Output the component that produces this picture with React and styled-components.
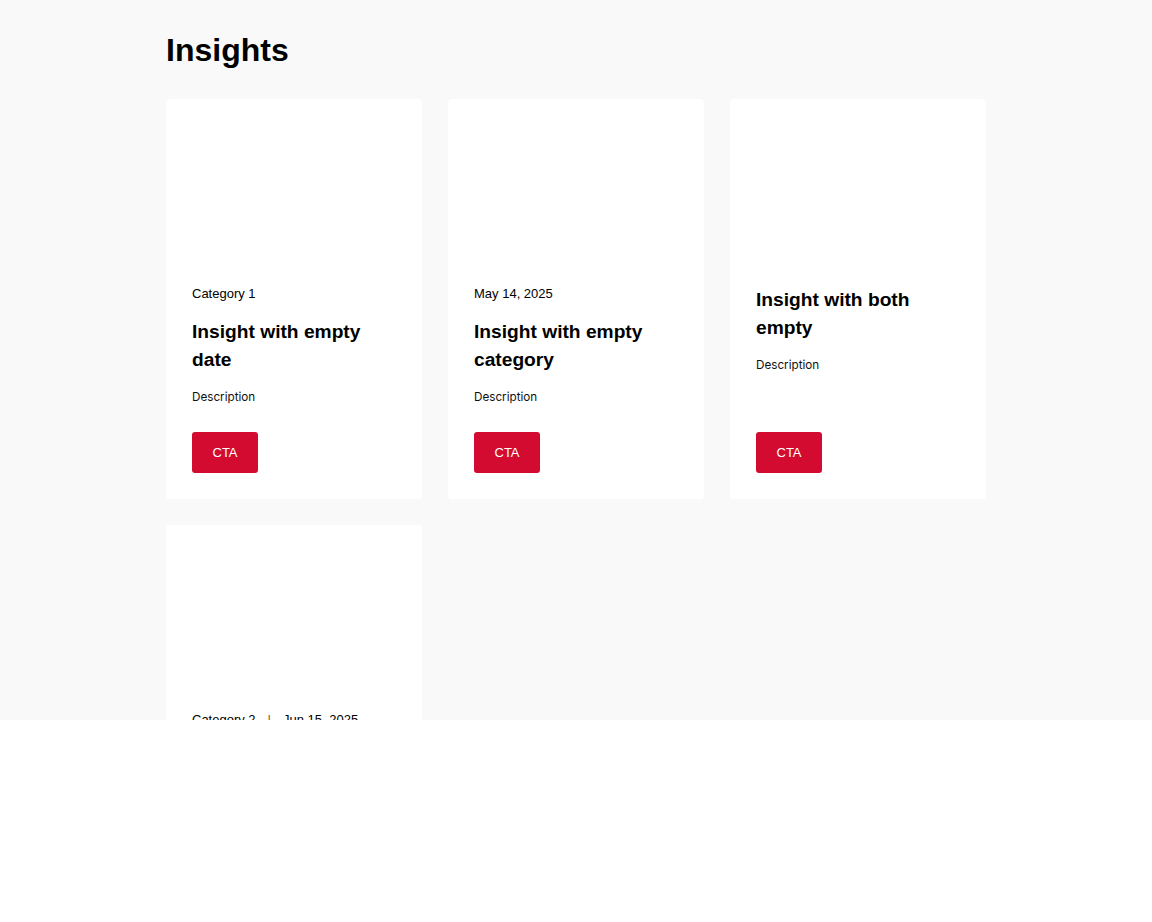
import React from "react";
import styled, { createGlobalStyle } from "styled-components";

const GlobalStyle = createGlobalStyle`
  body {
    margin: 0;
    background: #fff;
    font-family: "Liberation Sans", Arial, sans-serif;
    color: #000;
  }
`;

const Section = styled.section`
  height: 720px;
  overflow: hidden;
  background: #f9f9f9;
`;

const Container = styled.div`
  width: 820px;
  margin: 0 auto;
  padding-top: 32px;
`;

const Heading = styled.h1`
  margin: 0 0 30px;
  font-size: 32px;
  font-weight: 700;
  line-height: 37px;
`;

const Grid = styled.div`
  display: grid;
  grid-template-columns: repeat(3, 1fr);
  gap: 26px;
`;

const Card = styled.article`
  display: flex;
  flex-direction: column;
  background: #fff;
  border-radius: 4px;
`;

const ImageSlot = styled.div`
  height: 160px;
`;

const Body = styled.div`
  flex: 1;
  display: flex;
  flex-direction: column;
  padding: 27px 26px 26px;
`;

const Meta = styled.div`
  display: flex;
  align-items: center;
  gap: 12px;
  margin-bottom: 16px;
  font-size: 13px;
  line-height: 16px;
  color: #000;
`;

const Separator = styled.span`
  color: #7a5a2a;
`;

const Title = styled.h3`
  margin: 0 0 14px;
  font-size: 19.2px;
  font-weight: 700;
  line-height: 28px;
`;

const Description = styled.p`
  margin: 0 0 26px;
  font-family: Inter, "Liberation Sans", sans-serif;
  font-size: 11.7px;
  line-height: 18px;
  color: #111;
`;

const Cta = styled.a`
  margin-top: auto;
  align-self: flex-start;
  display: inline-block;
  padding: 12px 20.5px;
  background: #d30b30;
  border-radius: 3px;
  color: #fff;
  font-size: 13px;
  line-height: 17px;
  text-decoration: none;
`;

const insights = [
  { category: "Category 1", date: "", title: "Insight with empty date" },
  { category: "", date: "May 14, 2025", title: "Insight with empty category" },
  { category: "", date: "", title: "Insight with both empty" },
  { category: "Category 2", date: "Jun 15, 2025", title: "Insight with both filled" },
];

function InsightCard({ category, date, title }) {
  const hasMeta = category || date;
  return (
    <Card>
      <ImageSlot />
      <Body>
        {hasMeta && (
          <Meta>
            {category && <span>{category}</span>}
            {category && date && <Separator>|</Separator>}
            {date && <span>{date}</span>}
          </Meta>
        )}
        <Title>{title}</Title>
        <Description>Description</Description>
        <Cta href="#">CTA</Cta>
      </Body>
    </Card>
  );
}

export default function App() {
  return (
    <>
      <GlobalStyle />
      <Section>
        <Container>
          <Heading>Insights</Heading>
          <Grid>
            {insights.map((item, i) => (
              <InsightCard key={i} {...item} />
            ))}
          </Grid>
        </Container>
      </Section>
    </>
  );
}
